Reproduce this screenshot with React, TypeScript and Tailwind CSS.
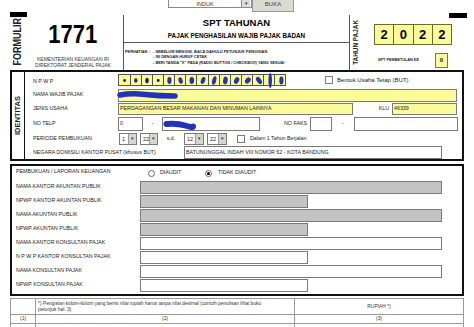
import React from 'react'

const blobs = [
  { rx: 1.4, ry: 1.4, r: 0, c: '#1a1a40' },
  { rx: 1.7, ry: 2.3, r: 0, c: '#1c2a90' },
  { rx: 1.8, ry: 2.7, r: 0, c: '#16206a' },
  { rx: 1.4, ry: 1.4, r: 0, c: '#1a1a40' },
  { rx: 2.1, ry: 3.4, r: 0, c: '#2233bb' },
  { rx: 2.1, ry: 3.4, r: -15, c: '#2233bb' },
  { rx: 2.3, ry: 3.4, r: 0, c: '#2233bb' },
  { rx: 2.1, ry: 3.6, r: 20, c: '#2233bb' },
  { rx: 2, ry: 4.4, r: 15, c: '#2233bb' },
  { rx: 2.3, ry: 3.9, r: 10, c: '#2233bb' },
  { rx: 2.3, ry: 3.6, r: 30, c: '#2233bb' },
  { rx: 2.5, ry: 3.4, r: 40, c: '#2233bb' },
  { rx: 2.3, ry: 4, r: -35, c: '#2233bb' },
  { rx: 1.8, ry: 7.5, r: 0, c: '#2233bb' },
  { rx: 2.1, ry: 4, r: 0, c: '#2233bb' },
]

function Dropdown({ value, className }: { value: string; className: string }) {
  return (
    <div className={`flex h-[12px] border border-[#7a7a7a] bg-white ${className}`}>
      <div className="flex-1 pl-[2px] text-[5.5px] leading-[10px] text-[#222]">{value}</div>
      <div className="flex w-[8px] items-center justify-center border-l border-[#9a9a9a] bg-[#d8d5cf] text-[5px] text-[#333]">▾</div>
    </div>
  )
}

function Checkbox() {
  return <div className="h-[8px] w-[8px] border border-[#7a7a7a] bg-white" />
}

function Label({ children, className = '' }: { children: React.ReactNode; className?: string }) {
  return <div className={`text-[5.3px] leading-none whitespace-nowrap text-[#222] ${className}`}>{children}</div>
}

export default function App() {
  const sunken = 'border border-[#7a7a7a]'
  const gray = `h-[13px] ${sunken} bg-[#c3c3c3]`
  const white = `h-[13px] ${sunken} bg-white`

  return (
    <div className="relative h-[327px] w-[474px] overflow-hidden bg-white font-['Liberation_Sans',Arial,sans-serif] text-[#111]">
      {/* top bar */}
      <div className="flex h-[11px] items-start pl-[168px]">
        <div className="-mt-[3px] flex h-[11px] w-[84px] border border-[#8a8a8a] bg-white">
          <div className="flex-1 pt-[4px] text-center text-[5.5px] leading-none text-[#333]">INDUK</div>
          <div className="mr-[1px] flex w-[9px] items-end justify-center border-l border-[#8a8a8a] bg-[#dedbd5] text-[5px] leading-[8px] text-[#333]">▾</div>
        </div>
        <div className="-mt-[3px] flex h-[15px] w-[42px] items-end justify-center border border-[#9a9a9a] bg-[#dcd9d2] pb-[4px] text-[6px] leading-none text-[#444]">
          BUKA
        </div>
      </div>

      {/* header */}
      <div className="flex h-[59px]">
        <div className="flex w-[123px] flex-col pl-[10px]">
          <div className="mt-[1px] h-[5px] w-[17px] bg-black" />
          <div className="flex flex-1">
            <div className="flex w-[16px] items-center justify-center pb-[4px]">
              <div className="rotate-180 scale-x-[1.15] text-[9px] leading-none font-bold text-[#222] [writing-mode:vertical-rl]">FORMULIR</div>
            </div>
            <div className="flex w-[94px] flex-col items-center">
              <div className="mt-[5px] scale-x-[0.88] text-[25px] leading-[24px] font-bold text-black">1771</div>
              <div className="mt-[10px] text-center text-[5px] leading-[6px] text-[#333]">
                KEMENTERIAN KEUANGAN RI
                <br />
                DIREKTORAT JENDERAL PAJAK
              </div>
            </div>
          </div>
        </div>

        <div className="mt-[4px] flex w-[227px] flex-col border-x border-[#555]">
          <div className="flex h-[28px] flex-col items-center border-b border-[#555]">
            <div className="mt-[2px] text-[9.5px] leading-[12px] font-bold text-black">SPT TAHUNAN</div>
            <div className="mt-[3px] text-[6.3px] leading-[8px] font-bold text-black">PAJAK PENGHASILAN WAJIB PAJAK BADAN</div>
          </div>
          <div className="pt-[6px] pl-[1px] text-[3.9px] leading-[5.4px] font-bold text-[#222]">
            <div className="flex">
              <span className="w-[28px]">PERHATIAN :</span>
              <span>- SEBELUM MENGISI, BACA DAHULU PETUNJUK PENGISIAN</span>
            </div>
            <div className="pl-[28px]">- ISI DENGAN HURUF CETAK</div>
            <div className="pl-[28px]">- BERI TANDA "X" PADA (RADIO BUTTON / CHECKBOX) YANG SESUAI</div>
          </div>
        </div>

        <div className="flex flex-1">
          <div className="flex w-[13px] items-center justify-center pt-[4px]">
            <div className="rotate-180 text-[6.4px] leading-none font-bold text-[#222] [writing-mode:vertical-rl]">TAHUN PAJAK</div>
          </div>
          <div className="flex flex-1 flex-col">
            <div className="mt-[2px] flex justify-end pr-[7px]">
              <div className="h-[5px] w-[18px] bg-black" />
            </div>
            <div className="mt-[6px] ml-[11px] flex h-[21px] w-[78px] border border-[#6a6a2a] bg-[#fbfb9c]">
              {['2', '0', '2', '2'].map((d, i) => (
                <div key={i} className={`flex flex-1 items-center justify-center text-[13px] font-bold text-black ${i > 0 ? 'border-l border-[#6a6a2a]' : ''}`}>
                  {d}
                </div>
              ))}
            </div>
            <div className="mt-[8px] ml-[15px] flex items-center">
              <div className="w-[55px] text-[3.8px] leading-none font-bold text-[#222]">SPT PEMBETULAN KE</div>
              <div className="ml-[2px] flex h-[15px] w-[13px] items-center justify-center border border-[#7a7a3a] bg-[#fbfb9c] text-[6px] font-bold">0</div>
            </div>
          </div>
        </div>
      </div>

      {/* identitas */}
      <div className="ml-[10px] flex h-[91px] w-[454px] border-2 border-[#111]">
        <div className="flex w-[13px] items-center justify-center border-r border-[#111]">
          <div className="rotate-180 text-[7.5px] leading-none font-bold text-[#222] [writing-mode:vertical-rl]">IDENTITAS</div>
        </div>
        <div className="flex flex-1 flex-col">
          <div className="flex h-[16px] items-start">
            <Label className="mt-[7px] w-[93px] pl-[8px]">N P W P</Label>
            <div className="relative mt-[2px] grid h-[12px] w-[168px] grid-cols-15 border border-[#555] bg-[#fbfb9c]">
              {blobs.map((_, i) => (
                <div key={i} className={i > 0 ? 'border-l border-[#555]' : ''} />
              ))}
              <svg className="absolute -top-[3px] left-0" width="168" height="16" viewBox="0 0 168 16">
                {blobs.map((b, i) => {
                  const cx = 11.2 * i + 5.6
                  return <ellipse key={i} cx={cx} cy={8.5} rx={b.rx} ry={b.ry} fill={b.c} transform={`rotate(${b.r} ${cx} 8.5)`} />
                })}
              </svg>
            </div>
            <div className="mt-[4px] ml-[39px] flex items-center">
              <Checkbox />
              <div className="ml-[4px] text-[6px] leading-none text-[#222]">Bentuk Usaha Tetap (BUT)</div>
            </div>
          </div>

          <div className="flex h-[14px] items-center">
            <Label className="w-[93px] pl-[8px]">NAMA WAJIB PAJAK</Label>
            <div className={`relative h-[13px] w-[339px] ${sunken} bg-[#fbfb9c]`}>
              <svg className="absolute top-[0px] -left-[2px]" width="62" height="11" viewBox="0 0 62 11">
                <path d="M3 5 Q 14 3 28 4.5 T 58 6" stroke="#2233bb" strokeWidth="5.5" strokeLinecap="round" fill="none" />
              </svg>
            </div>
          </div>

          <div className="flex h-[14px] items-center">
            <Label className="w-[93px] pl-[8px]">JENIS USAHA</Label>
            <div className={`flex h-[12px] w-[235px] items-center ${sunken} bg-[#fbfb9c] pl-[1px]`}>
              <Label>PERDAGANGAN BESAR MAKANAN DAN MINUMAN LAINNYA</Label>
            </div>
            <Label className="w-[39px] pr-[3px] text-right">KLU</Label>
            <div className={`flex h-[12px] w-[65px] items-center ${sunken} bg-[#fbfb9c] pl-[1px]`}>
              <Label>46339</Label>
            </div>
          </div>

          <div className="flex h-[15px] items-center">
            <Label className="w-[93px] pl-[8px]">NO TELP</Label>
            <div className={`flex h-[14px] w-[25px] items-center ${sunken} bg-white pl-[1px]`}>
              <Label>0</Label>
            </div>
            <Label className="w-[19px] text-center">-</Label>
            <div className={`relative h-[14px] w-[98px] ${sunken} bg-white`}>
              <svg className="absolute top-[2px] left-0" width="34" height="11" viewBox="0 0 34 11">
                <path d="M3.5 4 Q 14 3 22 5.5 T 30 6.5" stroke="#2233bb" strokeWidth="6" strokeLinecap="round" fill="none" />
              </svg>
            </div>
            <Label className="w-[50px] pr-[3px] text-right">NO FAKS</Label>
            <div className={`h-[14px] w-[22px] ${sunken} bg-white`} />
            <Label className="w-[22px] text-center">-</Label>
            <div className={`h-[14px] w-[104px] ${sunken} bg-white`} />
          </div>

          <div className="flex h-[15px] items-center">
            <Label className="w-[94px] pl-[8px]">PERIODE PEMBUKUAN</Label>
            <Dropdown value="1" className="w-[18px]" />
            <Dropdown value="22" className="ml-[3px] w-[18px]" />
            <Label className="w-[26px] text-center">s.d.</Label>
            <Dropdown value="12" className="w-[20px]" />
            <Dropdown value="22" className="ml-[3px] w-[20px]" />
            <div className="ml-[10px]">
              <Checkbox />
            </div>
            <Label className="ml-[5px]">Dalam 1 Tahun Berjalan</Label>
          </div>

          <div className="flex h-[13px] items-start">
            <Label className="mt-[4px] w-[159px] pl-[8px]">NEGARA DOMISILI KANTOR PUSAT (khusus BUT)</Label>
            <div className={`flex h-[13px] w-[258px] items-center ${sunken} bg-white pl-[1px]`}>
              <Label>BATUNUNGGAL INDAH VIII NOMOR 62 - KOTA BANDUNG</Label>
            </div>
          </div>
        </div>
      </div>

      {/* pembukuan / akuntan / konsultan */}
      <div className="mt-[3px] ml-[10px] flex h-[132px] w-[454px] flex-col border-2 border-[#111]">
        <div className="flex h-[14px] items-center">
          <Label className="-mt-[2px] w-[128px] pl-[4px]">PEMBUKUAN / LAPORAN KEUANGAN</Label>
          <div className="ml-[8px] h-[7px] w-[7px] rounded-full border border-[#666] bg-white" />
          <Label className="ml-[5px] w-[45px]">DIAUDIT</Label>
          <div className="flex h-[7px] w-[7px] items-center justify-center rounded-full border border-[#666] bg-white">
            <div className="h-[3px] w-[3px] rounded-full bg-black" />
          </div>
          <Label className="ml-[6px]">TIDAK DIAUDIT</Label>
        </div>
        {[
          ['NAMA KANTOR AKUNTAN PUBLIK', gray, 'w-[302px]'],
          ['NPWP KANTOR AKUNTAN PUBLIK', gray, 'w-[168px]'],
          ['NAMA AKUNTAN PUBLIK', gray, 'w-[302px]'],
          ['NPWP AKUNTAN PUBLIK', gray, 'w-[168px]'],
          ['NAMA KANTOR KONSULTAN PAJAK', white, 'w-[302px]'],
          ['N P W P KANTOR KONSULTAN PAJAK', white, 'w-[168px]'],
          ['NAMA KONSULTAN PAJAK', white, 'w-[302px]'],
          ['NPWP KONSULTAN PAJAK', white, 'w-[168px]'],
        ].map(([label, style, w]) => (
          <div key={label} className="flex h-[14px] items-center">
            <Label className="w-[128px] pl-[4px]">{label}</Label>
            <div className={`${style} ${w}`} />
          </div>
        ))}
      </div>

      {/* table */}
      <div className="mt-[2px] ml-[10px] w-[454px] border-t border-l border-[#9a9a9a] text-[#333]">
        <div className="flex h-[16px]">
          <div className="w-[25px] border-r border-b border-[#9a9a9a]" />
          <div className="w-[259px] border-r border-b border-[#9a9a9a] pt-[2px] pl-[2px] text-[4.9px] leading-[6px]">
            *) Pengisian kolom-kolom yang berisi nilai rupiah harus tanpa nilai desimal (contoh penulisan lihat buku
            <br />
            petunjuk hal. 3)
          </div>
          <div className="flex flex-1 items-center justify-center border-r border-b border-[#9a9a9a] text-[4.9px]">RUPIAH *)</div>
        </div>
        <div className="flex h-[9px] text-[4.9px]">
          <div className="flex w-[25px] items-center justify-center border-r border-b border-[#9a9a9a]">(1)</div>
          <div className="flex w-[259px] items-center justify-center border-r border-b border-[#9a9a9a]">(2)</div>
          <div className="flex flex-1 items-center justify-center border-r border-b border-[#9a9a9a]">(3)</div>
        </div>
        <div className="flex h-[10px]">
          <div className="w-[25px] border-r border-[#9a9a9a]" />
          <div className="w-[259px] border-r border-[#9a9a9a]" />
          <div className="flex-1 border-r border-[#9a9a9a]" />
        </div>
      </div>
    </div>
  )
}
